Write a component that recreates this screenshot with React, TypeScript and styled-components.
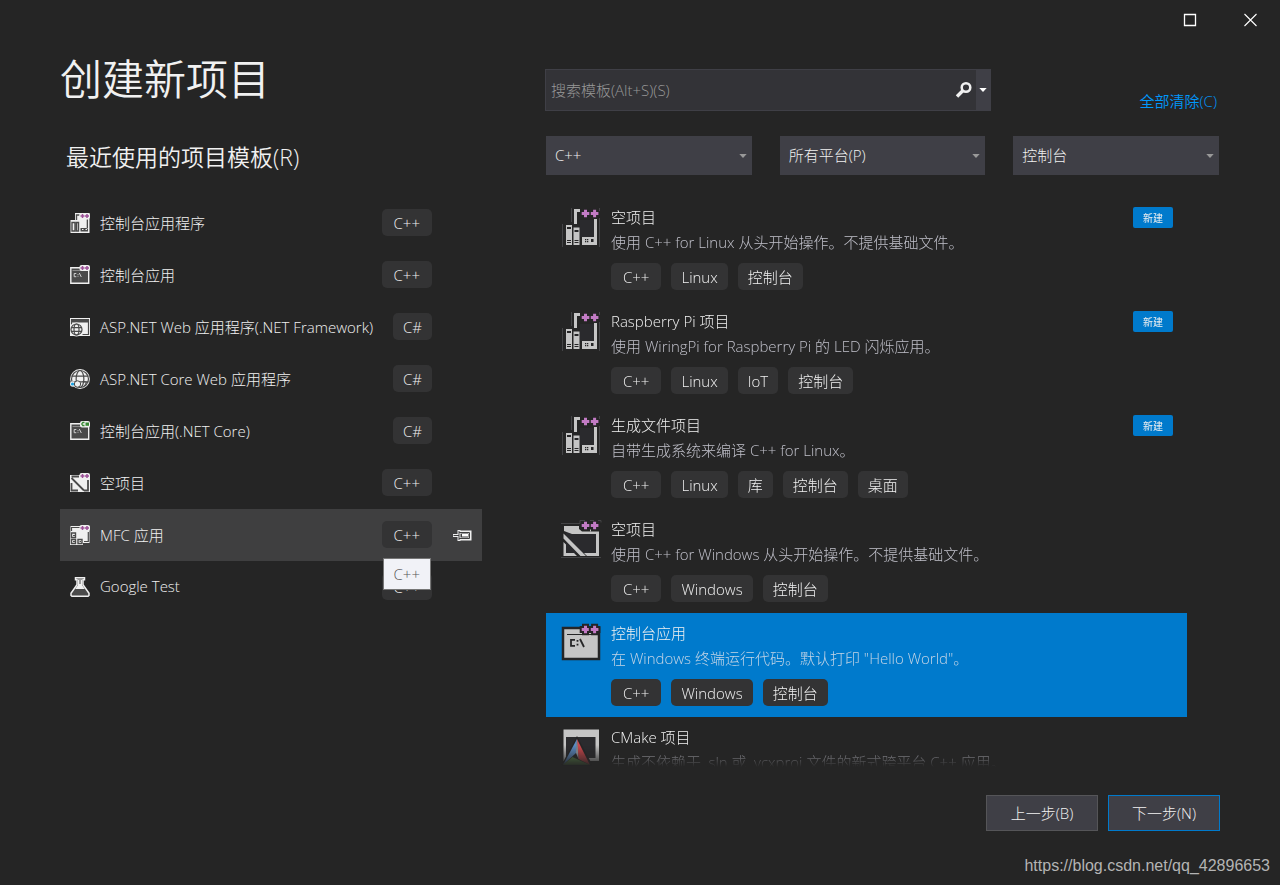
import React from "react";
import styled, { createGlobalStyle } from "styled-components";

const GlobalStyle = createGlobalStyle`
  *, *::before, *::after { box-sizing: border-box; }
  body {
    margin: 0;
    background: #252525;
    color: #f1f1f1;
    font-family: "Open Sans", "Noto Sans CJK SC", sans-serif;
    font-weight: 300;
    font-size: 15px;
  }
  button, input, select { font: inherit; color: inherit; }
`;

const Window = styled.div`
  display: flex;
  flex-direction: column;
  height: 100vh;
  min-height: 640px;
  overflow: hidden;
`;

const TitleBar = styled.header`
  display: flex;
  justify-content: flex-end;
  height: 40px;
  flex: none;
`;

const CaptionButton = styled.button`
  display: grid;
  place-items: center;
  width: 60px;
  padding: 0;
  border: 0;
  background: none;
`;

const Body = styled.main`
  flex: 1;
  min-height: 0;
  display: grid;
  grid-template-columns: minmax(0, 422fr) minmax(0, 674fr);
  grid-template-rows: minmax(0, 1fr);
  column-gap: 63px;
  padding: 0 61px 0 60px;
`;

const Recent = styled.section`
  display: flex;
  flex-direction: column;
  padding-top: 15px;
`;

const Title = styled.h1`
  margin: 0 0 38px;
  font-size: 42px;
  line-height: 48px;
  font-weight: 350;
`;

const Subtitle = styled.h2`
  margin: 0 0 24px;
  padding-left: 6px;
  font-size: 23px;
  line-height: 32px;
  font-weight: 350;
`;

const List = styled.ul`
  list-style: none;
  margin: 0;
  padding: 0;
`;

const RecentRow = styled.li<{ $active?: boolean }>`
  display: flex;
  align-items: center;
  height: 52px;
  padding-left: 10px;
  background: ${(p) => (p.$active ? "#3f3f40" : "transparent")};
`;

const RecentName = styled.span`
  flex: 1;
  padding: 0 0 2px 10px;
  white-space: nowrap;
`;

const PinSlot = styled.span`
  display: grid;
  place-items: center;
  width: 50px;
  padding-left: 10px;
`;

const PinButton = styled.button`
  display: grid;
  padding: 0;
  border: 0;
  background: none;
`;

const TagAnchor = styled.span`
  position: relative;
  display: block;
  padding-bottom: 2px;
`;

const Tag = styled.span<{ $wide?: boolean }>`
  display: block;
  height: 27px;
  line-height: 28px;
  padding: 0 ${(p) => (p.$wide ? 12 : 10)}px;
  border-radius: 5px;
  background: #333334;
  white-space: nowrap;
`;

const Tooltip = styled.span`
  position: absolute;
  z-index: 1;
  top: 37px;
  left: 1px;
  height: 32px;
  line-height: 30px;
  padding: 0 10px;
  border: 1px solid #767676;
  background: #f1f2f7;
  color: #575757;
`;

const Browse = styled.section`
  display: flex;
  flex-direction: column;
  min-height: 0;
  padding-top: 29px;
`;

const SearchRow = styled.div`
  display: flex;
  justify-content: space-between;
  align-items: flex-end;
  margin-bottom: 25px;
`;

const SearchBox = styled.form`
  display: flex;
  align-items: stretch;
  width: 66.2%;
  height: 42px;
  border: 1px solid #3f3f46;
  background: #333337;
`;

const SearchInput = styled.input`
  flex: 1;
  min-width: 0;
  padding: 0 5px;
  border: 0;
  outline: 0;
  background: none;
  &::placeholder { color: #999; opacity: 1; }
`;

const SearchButton = styled.button<{ $menu?: boolean }>`
  display: grid;
  place-items: center;
  width: ${(p) => (p.$menu ? 14 : 24)}px;
  padding: 0;
  border: 0;
  background: ${(p) => (p.$menu ? "#3f3f46" : "none")};
`;

const ClearLink = styled.a`
  padding-right: 2px;
  line-height: 20px;
  color: #0097fb;
  font-weight: 350;
  text-decoration: none;
`;

const Filters = styled.div`
  display: grid;
  grid-template-columns: repeat(3, 1fr);
  gap: 28px;
  margin-bottom: 22px;
  padding-left: 1px;
`;

const Filter = styled.label`
  position: relative;
  display: block;
  svg { position: absolute; right: 5px; top: 18px; pointer-events: none; }
`;

const FilterSelect = styled.select`
  display: block;
  appearance: none;
  width: 100%;
  height: 39px;
  padding: 0 20px 2px 9px;
  border: 0;
  border-radius: 0;
  background: #3f3f46;
`;

const Results = styled(List)`
  flex: 1;
  min-height: 0;
  padding: 0 32px 0 1px;
  overflow: auto;
  scrollbar-width: none;
  mask-image: linear-gradient(#000 calc(100% - 22px), transparent);
`;

const Result = styled.li<{ $active?: boolean }>`
  display: flex;
  align-items: flex-start;
  height: 104px;
  padding: 8px 14px 0 16px;
  background: ${(p) => (p.$active ? "#007acc" : "transparent")};
`;

const ResultIcon = styled.div`
  flex: none;
  width: 49px;
  padding-top: 3px;
  svg { display: block; overflow: visible; }
`;

const ResultText = styled.div`
  flex: 1;
  min-width: 0;
  line-height: 25px;
  white-space: nowrap;
`;

const ResultName = styled.h3`
  margin: 0;
  font: inherit;
`;

const ResultDescription = styled.p<{ $active?: boolean }>`
  margin: 0 0 8px;
  color: ${(p) => (p.$active ? "#c5d5e6" : "#c0c0ca")};
`;

const Tags = styled.div`
  display: flex;
  gap: 10px;
`;

const Badge = styled.span`
  flex: none;
  width: 40px;
  height: 21px;
  margin-top: 2px;
  border-radius: 2px;
  background: #007acc;
  font-size: 10px;
  font-weight: 400;
  line-height: 22px;
  text-align: center;
`;

const Footer = styled.footer`
  display: flex;
  justify-content: flex-end;
  gap: 10px;
  padding: 28px 60px 26px;
`;

const FooterButton = styled.button<{ $primary?: boolean }>`
  width: 112px;
  height: 36px;
  padding: 0 0 1px;
  border: 1px solid ${(p) => (p.$primary ? "#007acc" : "#555558")};
  background: #3f3f46;
`;

const Watermark = styled.div`
  padding: 0 10px 10px;
  font: 400 16px/18px "Liberation Sans", sans-serif;
  color: #b4b4b4;
  text-align: right;
`;

const L = "#c5c5c5";
const W = "#f0f0f0";
const D = "#4a4a4a";

const PLUS = "M-1.500-3.800h3v2.300h2.300v3H1.500v2.300h-3V1.500h-2.300v-3h2.300z";

function PlusPair({ outline }: { outline?: string }) {
  return (
    <g fill="#c27bc4" stroke={outline} strokeWidth={outline ? 4 : 0} paintOrder="stroke">
      <path d={PLUS} transform="translate(23.500 5.500)" />
      <path d={PLUS} transform="translate(32.600 5.500)" />
    </g>
  );
}

function SmallPlusPair() {
  return (
    <g>
      <rect x="9.500" y="0" width="10.500" height="6" rx="2" fill={W} />
      <path d="M12.500 1v4M10.500 3h4M17 1v4M15 3h4" stroke="#9b4f96" strokeWidth="1.500" />
    </g>
  );
}

function DevicesIcon() {
  return (
    <svg width="40" height="40" viewBox="0 0 40 40" aria-hidden="true">
      <path d="M.5 16v23M9.500 0v14M37.500 10v29M37.500 0v3" stroke="#444446" fill="none" />
      <path d="M18 12h14v17H18z" fill="#2a2a2d" />
      <path fill={L} d="M12 1h6v3h-3v12h-3zM4 17h6v20H4zM11.500 19.500h6V37h-6zM32 11h3v26H20v-8h12z" />
      <path fill="#252526" d="M5 19h4v2H5zM5 32h4v1H5zM5 34h4v1H5zM12.500 22h4v2h-4zM12.500 32h4v1h-4zM12.500 34h4v1h-4zM29 31h2.500v3H29zM23 31h1.300v1.300H23zM25 31h1.300v1.300H25zM23 33h1.300v1.300H23zM25 33h1.300v1.300H25z" />
      <PlusPair />
    </svg>
  );
}

function EmptyIcon() {
  return (
    <svg width="40" height="40" viewBox="0 0 40 40" aria-hidden="true">
      <path d="M-1 3.500h19V.5h5M28 .5h4M36 .5h3v2M-1 37.500h40" stroke="#444446" fill="none" />
      <path d="M4 12h30v21H4z" fill="#2a2a2d" />
      <path fill={L} d="M2 6h15v3l3 2.500h17V36H25l-3-3h12V14H10L2 11zM1.500 13.500L24 36h-5.500L1.500 18.500zM1.500 22l2.500 2.500V33h8l3 3H1.500z" />
      <path d="M28 9.500h1v2h-1z" fill={L} />
      <PlusPair />
    </svg>
  );
}

function ConsoleIcon() {
  return (
    <svg width="40" height="40" viewBox="0 0 40 40" aria-hidden="true">
      <path d="M1 4h36v31H1z" fill={L} stroke="#252526" strokeWidth="2.500" />
      <path d="M5 10.500h28" stroke="#252526" />
      <path d="M13 15.800H9v6h4M15.500 16v1.800M15.500 19.800v1.800M18 15l4 8" stroke="#252526" strokeWidth="1.800" fill="none" />
      <PlusPair outline="#252526" />
    </svg>
  );
}

function CMakeIcon() {
  return (
    <svg width="40" height="40" viewBox="0 0 40 40" aria-hidden="true">
      <path d="M1.500 1.500h35.500V33H1.500z" fill={L} />
      <path d="M4 9h29.500v21H4z" fill="#2b2b2e" />
      <path d="M15 8L-1 38h32z" fill="#252526" />
      <path d="M15 11L1 37l13-12z" fill="#5c8bc4" />
      <path d="M15 11l13 26-11.500-6z" fill="#d0474c" />
      <path d="M15 11l-1 14 2.500 6z" fill="#a9b0b8" />
      <path d="M1 37l9.500-8L28 37z" fill="#5c8a4a" />
    </svg>
  );
}

function SmallIcon({ children }: { children: React.ReactNode }) {
  return (
    <svg width="20" height="20" viewBox="0 0 20 20" fill="none" aria-hidden="true">
      {children}
    </svg>
  );
}

function ConsoleBase() {
  return (
    <g>
      <path d="M.8 2.800h17.900v15.400H.8z" fill={D} stroke={W} strokeWidth="1.400" />
      <path d="M2.500 5.500h14" stroke="#999" strokeWidth=".8" />
      <path d="M6.300 8.500H4.200v3.200h2.100M8 9v.8M8 10.800v.8M9.300 8l2 4" stroke="#d0d0d0" strokeWidth="1" />
    </g>
  );
}

function GlobeLines({ cx, cy, r }: { cx: number; cy: number; r: number }) {
  return (
    <g stroke={D} strokeWidth="1.200">
      <circle cx={cx} cy={cy} r={r + 1.4} fill={W} stroke="none" />
      <circle cx={cx} cy={cy} r={r} fill={W} />
      <ellipse cx={cx} cy={cy} rx={r / 2.2} ry={r} />
      <path d={`M${cx - r} ${cy - r / 3}h${2 * r}M${cx - r} ${cy + r / 3}h${2 * r}`} />
    </g>
  );
}

const smallIcons: Record<string, React.ReactNode> = {
  devices: (
    <SmallIcon>
      <path d="M5 0h14.500v20H.5V7H5z" fill={W} />
      <path d="M6.500 7V2h3M2 9.500h3V18H2zM6.500 9.500h2V18h-2z" stroke={D} strokeWidth="1.400" />
      <path d="M10.500 15.500h7.500V6.500h-1.300v9M10.500 15h7.500v3.500h-7.500z" fill={D} />
      <path d="M12 16.500h1.500M15.500 16.500H17" stroke={W} />
      <SmallPlusPair />
    </SmallIcon>
  ),
  console: (
    <SmallIcon>
      <ConsoleBase />
      <SmallPlusPair />
    </SmallIcon>
  ),
  web: (
    <SmallIcon>
      <path d="M0 1h20v18H0z" fill={W} />
      <path d="M1.500 2.500h17v15h-6M1.500 2.500v5" stroke={D} strokeWidth="1.200" />
      <path d="M1 2h18v3.500H1z" fill={D} />
      <GlobeLines cx={6.5} cy={12.5} r={5.5} />
    </SmallIcon>
  ),
  core: (
    <SmallIcon>
      <GlobeLines cx={10} cy={10} r={8.5} />
      <circle cx="2.800" cy="15" r="2.800" fill={W} />
      <circle cx="2.500" cy="15" r="1.600" fill="#1ba1e2" />
      <circle cx="7.500" cy="15" r="3.200" fill={W} stroke={D} />
      <path d="M12.500 12.500l4 .5-2 4" stroke={D} />
    </SmallIcon>
  ),
  csharp: (
    <SmallIcon>
      <ConsoleBase />
      <rect x="10" y="0" width="10" height="6.500" rx="2" fill={W} />
      <path d="M14.500 1.500h-1.700l-1 1.500 1 1.500h1.700" stroke="#388a34" strokeWidth="1.300" />
      <path d="M15.500 1.500H19v3.300h-3.500z" fill="#388a34" />
    </SmallIcon>
  ),
  empty: (
    <SmallIcon>
      <path d="M0 2h10v2h10v15H0z" fill={W} />
      <path d="M1.500 3.500H9M1.500 5L14 17.500M1.500 10v7.500H8M14 17.500h4V7" stroke={D} strokeWidth="1.800" />
      <SmallPlusPair />
    </SmallIcon>
  ),
  mfc: (
    <SmallIcon>
      <path d="M.5 1h19v17H13v2H0z" fill={W} />
      <path d="M1.500 6V2.500H10M18.300 7v9.500H14" stroke={D} strokeWidth="1.200" />
      <path d="M1.500 8h4v4.500h-4zM1.500 14.500h4v4h-4zM8 14.500h4v4H8z" stroke={D} strokeWidth="1.400" />
      <path d="M3 10.500h2M3 16.500h2M9.500 16.500h1.500" stroke={D} />
      <SmallPlusPair />
    </SmallIcon>
  ),
  flask: (
    <SmallIcon>
      <path d="M5.500.8h9v2H13v5l6 8.500v2.200l-1 .8H2l-1-.8v-2.200L7 7.800v-5H5.500z" fill={D} stroke={W} strokeWidth="1.500" />
      <path d="M8 2.500h4V8l2.800 4H5.200L8 8z" fill={W} />
      <path d="M10 3v4" stroke={D} />
    </SmallIcon>
  ),
};

function DropArrow({ color }: { color: string }) {
  return (
    <svg width="8" height="4" viewBox="0 0 8 4" aria-hidden="true">
      <path d="M.3 0h7.400L4 4z" fill={color} />
    </svg>
  );
}

const recent = [
  { icon: "devices", name: "控制台应用程序", lang: "C++" },
  { icon: "console", name: "控制台应用", lang: "C++" },
  { icon: "web", name: "ASP.NET Web 应用程序(.NET Framework)", lang: "C#" },
  { icon: "core", name: "ASP.NET Core Web 应用程序", lang: "C#" },
  { icon: "csharp", name: "控制台应用(.NET Core)", lang: "C#" },
  { icon: "empty", name: "空项目", lang: "C++" },
  { icon: "mfc", name: "MFC 应用", lang: "C++", active: true },
  { icon: "flask", name: "Google Test", lang: "C++" },
];

const results = [
  { Icon: DevicesIcon, name: "空项目", text: "使用 C++ for Linux 从头开始操作。不提供基础文件。", tags: ["C++", "Linux", "控制台"], isNew: true },
  { Icon: DevicesIcon, name: "Raspberry Pi 项目", text: "使用 WiringPi for Raspberry Pi 的 LED 闪烁应用。", tags: ["C++", "Linux", "IoT", "控制台"], isNew: true },
  { Icon: DevicesIcon, name: "生成文件项目", text: "自带生成系统来编译 C++ for Linux。", tags: ["C++", "Linux", "库", "控制台", "桌面"], isNew: true },
  { Icon: EmptyIcon, name: "空项目", text: "使用 C++ for Windows 从头开始操作。不提供基础文件。", tags: ["C++", "Windows", "控制台"] },
  { Icon: ConsoleIcon, name: "控制台应用", text: "在 Windows 终端运行代码。默认打印 \"Hello World\"。", tags: ["C++", "Windows", "控制台"], active: true },
  { Icon: CMakeIcon, name: "CMake 项目", text: "生成不依赖于 .sln 或 .vcxproj 文件的新式跨平台 C++ 应用。", tags: [] as string[] },
];

const filters = [
  { label: "语言", value: "C++" },
  { label: "平台", value: "所有平台(P)" },
  { label: "项目类型", value: "控制台" },
];

export default function App() {
  return (
    <Window lang="zh-CN">
      <GlobalStyle />
      <TitleBar>
        <CaptionButton type="button" aria-label="最大化">
          <svg width="14" height="14" viewBox="0 0 14 14" fill="none" aria-hidden="true">
            <path d="M1.500 1.500h11v11h-11z" stroke="#fff" strokeWidth="1.300" />
          </svg>
        </CaptionButton>
        <CaptionButton type="button" aria-label="关闭">
          <svg width="14" height="14" viewBox="0 0 14 14" fill="none" aria-hidden="true">
            <path d="M1.500 1l12 12M13.500 1l-12 12" stroke="#fff" strokeWidth="1.100" />
          </svg>
        </CaptionButton>
      </TitleBar>
      <Body>
        <Recent>
          <Title>创建新项目</Title>
          <Subtitle>最近使用的项目模板(R)</Subtitle>
          <List>
            {recent.map((r) => (
              <RecentRow key={r.name} $active={r.active}>
                {smallIcons[r.icon]}
                <RecentName>{r.name}</RecentName>
                <TagAnchor>
                  <Tag $wide={r.lang === "C++"}>{r.lang}</Tag>
                  {r.active && <Tooltip role="tooltip">{r.lang}</Tooltip>}
                </TagAnchor>
                <PinSlot>
                  {r.active && (
                    <PinButton type="button" aria-label="固定">
                      <svg width="20" height="13" viewBox="0 0 20 13" fill="none" aria-hidden="true">
                        <path d="M1 6.500h6M7 1v11M7.500 3h10.500v7H7.500" stroke={W} strokeWidth="3" />
                        <path d="M1.500 6.500H7M7 2v9M7 3.500h10.500v6H7" stroke="#3f3f40" />
                        <path d="M10 5h6v2.500h-6z" fill="#fff" />
                      </svg>
                    </PinButton>
                  )}
                </PinSlot>
              </RecentRow>
            ))}
          </List>
        </Recent>
        <Browse>
          <SearchRow>
            <SearchBox role="search" onSubmit={(e) => e.preventDefault()}>
              <SearchInput type="text" aria-label="搜索模板" placeholder="搜索模板(Alt+S)(S)" />
              <SearchButton type="submit" aria-label="搜索">
                <svg width="18" height="18" viewBox="0 0 18 18" fill="none" aria-hidden="true">
                  <circle cx="11" cy="6.500" r="4.300" stroke={W} strokeWidth="2.500" />
                  <path d="M8 9.500L2 15.500" stroke={W} strokeWidth="3.400" />
                </svg>
              </SearchButton>
              <SearchButton $menu type="button" aria-label="搜索选项">
                <DropArrow color="#fff" />
              </SearchButton>
            </SearchBox>
            <ClearLink href="#clear">全部清除(C)</ClearLink>
          </SearchRow>
          <Filters>
            {filters.map((f) => (
              <Filter key={f.label}>
                <FilterSelect aria-label={f.label} defaultValue={f.value}>
                  <option>{f.value}</option>
                </FilterSelect>
                <DropArrow color="#999" />
              </Filter>
            ))}
          </Filters>
          <Results>
            {results.map(({ Icon, ...r }, i) => (
              <Result key={i} $active={r.active}>
                <ResultIcon>
                  <Icon />
                </ResultIcon>
                <ResultText>
                  <ResultName>{r.name}</ResultName>
                  <ResultDescription $active={r.active}>{r.text}</ResultDescription>
                  <Tags>
                    {r.tags.map((t) => (
                      <Tag key={t} $wide={t === "C++"}>
                        {t}
                      </Tag>
                    ))}
                  </Tags>
                </ResultText>
                {r.isNew && <Badge>新建</Badge>}
              </Result>
            ))}
          </Results>
        </Browse>
      </Body>
      <Footer>
        <FooterButton type="button">上一步(B)</FooterButton>
        <FooterButton type="button" $primary>
          下一步(N)
        </FooterButton>
      </Footer>
      <Watermark>https://blog.csdn.net/qq_42896653</Watermark>
    </Window>
  );
}
